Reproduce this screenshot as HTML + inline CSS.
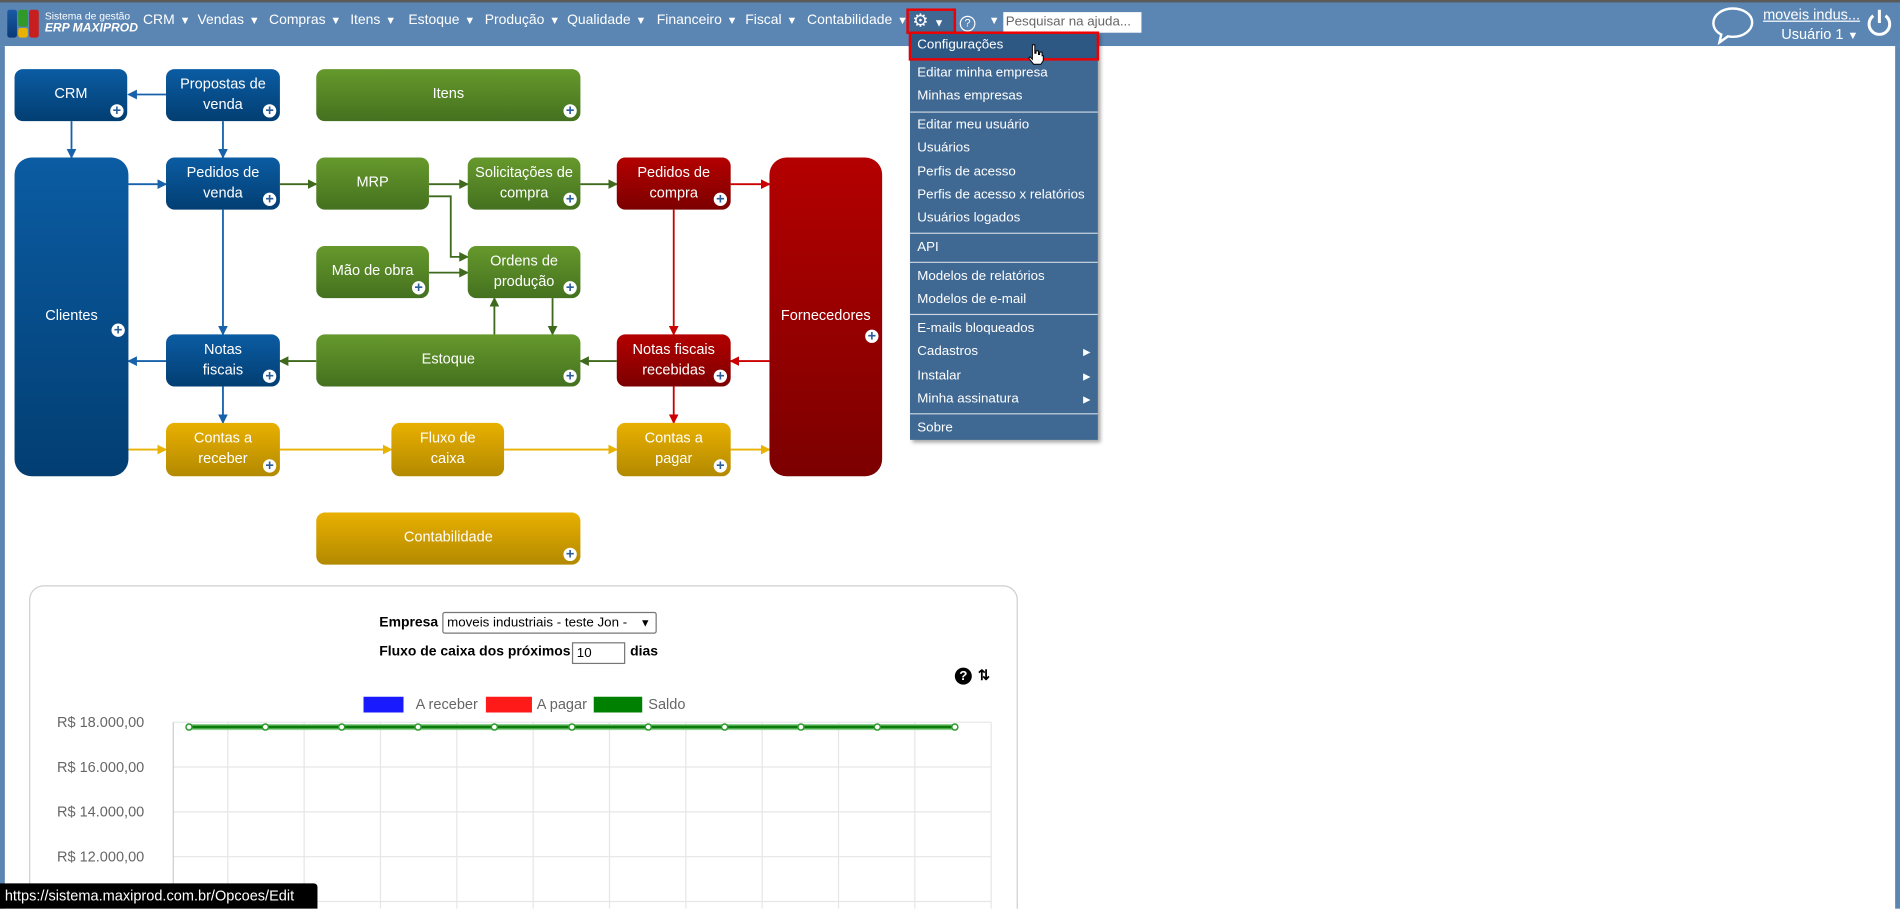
<!DOCTYPE html>
<html><head><meta charset="utf-8"><style>
html,body{margin:0;padding:0;width:1900px;height:909px;overflow:hidden;background:#fff;font-family:"Liberation Sans",Arial,sans-serif}
#w{position:absolute;left:0;top:0;width:1568px;height:750px;transform:scale(1.21173);transform-origin:0 0;overflow:hidden}
.top{position:absolute;left:0;top:0;width:1568px;height:38px;background:#5b86b3;border-top:2px solid #5a5a5a;box-sizing:border-box}
.lb{position:absolute;left:0;top:38px;width:4px;height:712px;background:#5b86b3}
.rb{position:absolute;left:1564px;top:38px;width:4px;height:712px;background:#5b86b3}
.nav{position:absolute;top:11px;color:#fff;font-size:11.5px}
.nav i{font-style:normal;font-size:9px;margin-left:4px}
.menu{position:absolute;left:751px;top:26px;width:155px;height:337px;background:#3f6893;box-shadow:2px 2px 3px rgba(0,0,0,.35)}
.mi{position:absolute;left:6px;color:#fff;font-size:11px}
.sep{position:absolute;left:0;width:155px;height:1px;background:#c8d4e0}
.arr{position:absolute;right:6px;font-size:8px}
.b{position:absolute;border-radius:7px;color:#fff;font-size:12px;display:flex;align-items:center;justify-content:center;text-align:center;line-height:17px;box-sizing:border-box;padding-bottom:2px}
.bl{background:linear-gradient(#0b5ca3,#023e72)}
.gr{background:linear-gradient(#66992c,#44711f)}
.rd{background:linear-gradient(#b40000,#7c0000)}
.ye{background:linear-gradient(#e9b000,#b28900)}
.p{position:absolute;width:11px;height:11px;border-radius:50%;background:#fff;right:3px;bottom:3px;color:#2a5d9a;font-size:12px;line-height:11px;text-align:center;font-weight:bold}
.panel{position:absolute;left:24px;top:483px;width:816px;height:300px;border:1px solid #cfcfcf;border-radius:12px;box-sizing:border-box}
.yl{position:absolute;left:47px;color:#666;font-size:12px}
</style></head><body><div id="w">
<div class="top"></div>
<div class="lb"></div><div class="rb"></div>
<div style="position:absolute;left:6px;top:8px;width:8px;height:23px;background:linear-gradient(#1b5aa5,#0a3a78);border-radius:2px"></div>
<div style="position:absolute;left:15px;top:8px;width:8px;height:14px;background:#2f9a2a;border-radius:2px"></div>
<div style="position:absolute;left:15px;top:23px;width:8px;height:8px;background:#e9b100;border-radius:2px"></div>
<div style="position:absolute;left:24px;top:8px;width:8px;height:23px;background:#c71f1f;border-radius:2px"></div>
<div style="position:absolute;left:37px;top:8px;color:#fff;font-size:8.5px;line-height:10px">Sistema de gestão<br><b style="font-style:italic;font-size:10px">ERP MAXIPROD</b></div>
<div class="nav" style="left:118px">CRM<i>▼</i></div>
<div class="nav" style="left:163px">Vendas<i>▼</i></div>
<div class="nav" style="left:222px">Compras<i>▼</i></div>
<div class="nav" style="left:289px">Itens<i>▼</i></div>
<div class="nav" style="left:337px">Estoque<i>▼</i></div>
<div class="nav" style="left:400px">Produção<i>▼</i></div>
<div class="nav" style="left:468px">Qualidade<i>▼</i></div>
<div class="nav" style="left:542px">Financeiro<i>▼</i></div>
<div class="nav" style="left:615px">Fiscal<i>▼</i></div>
<div class="nav" style="left:666px">Contabilidade<i>▼</i></div>
<div style="position:absolute;left:748px;top:7px;width:41px;height:21px;border:2px solid #e00;background:#3f6893;box-sizing:border-box"></div>
<div class="nav" style="left:753px;top:8px;font-size:15px">⚙<i>▼</i></div>
<div style="position:absolute;left:792px;top:13px;width:11px;height:11px;border:1.5px solid #fff;border-radius:50%;color:#fff;font-size:9px;line-height:11px;text-align:center">?</div>
<div class="nav" style="left:812px;top:11px"><i>▼</i></div>
<div style="position:absolute;left:828px;top:10px;width:114px;height:17px;background:#fff;color:#666;font-size:11px;line-height:17px;padding-left:2px;box-sizing:border-box">Pesquisar na ajuda...</div>
<svg style="position:absolute;left:1412px;top:5px" width="36" height="32" viewBox="0 0 36 32"><path d="M18 2C9 2 2 7.5 2 14c0 4 2.5 7.5 6.5 9.5L7 30l7-5c1.3.3 2.6.4 4 .4 9 0 16-5.5 16-11.9S27 2 18 2z" fill="none" stroke="#fff" stroke-width="2"/></svg>
<div style="position:absolute;left:1455px;top:5px;color:#fff;font-size:12px;text-decoration:underline">moveis indus...</div>
<div style="position:absolute;left:1470px;top:21px;color:#fff;font-size:12px">Usuário 1 <span style="font-size:9px">▼</span></div>
<svg style="position:absolute;left:1540px;top:6px" width="22" height="26" viewBox="0 0 22 26"><path d="M6 7A8.5 8.5 0 1 0 16 7" fill="none" stroke="#fff" stroke-width="2.5"/><line x1="11" y1="2" x2="11" y2="13" stroke="#fff" stroke-width="2.5"/></svg>
<div class="menu">
<div style="position:absolute;left:-1px;top:0;width:157px;height:24px;background:#2e5884;border:2px solid #e00;box-sizing:border-box"></div>
<div class="mi" style="top:5px">Configurações</div>
<div class="mi" style="top:28px">Editar minha empresa</div>
<div class="mi" style="top:47px">Minhas empresas</div>
<div class="sep" style="top:66px"></div>
<div class="mi" style="top:71px">Editar meu usuário</div>
<div class="mi" style="top:90px">Usuários</div>
<div class="mi" style="top:110px">Perfis de acesso</div>
<div class="mi" style="top:129px">Perfis de acesso x relatórios</div>
<div class="mi" style="top:148px">Usuários logados</div>
<div class="sep" style="top:166px"></div>
<div class="mi" style="top:172px">API</div>
<div class="sep" style="top:190px"></div>
<div class="mi" style="top:196px">Modelos de relatórios</div>
<div class="mi" style="top:215px">Modelos de e-mail</div>
<div class="sep" style="top:233px"></div>
<div class="mi" style="top:239px">E-mails bloqueados</div>
<div class="mi" style="top:258px">Cadastros</div><div class="mi arr" style="top:260px;left:auto">▶</div>
<div class="mi" style="top:278px">Instalar</div><div class="mi arr" style="top:280px;left:auto">▶</div>
<div class="mi" style="top:297px">Minha assinatura</div><div class="mi arr" style="top:299px;left:auto">▶</div>
<div class="sep" style="top:315px"></div>
<div class="mi" style="top:321px">Sobre</div>
</div>
<svg style="position:absolute;left:848px;top:36px" width="14" height="18" viewBox="0 0 14 18"><path d="M4 1h2v7h1V6h2v3h1V7h2v3h1v4l-2 3H5L1 12l1-1 2 2z" fill="#fff" stroke="#000" stroke-width=".8"/></svg>
<svg style="position:absolute;left:0;top:0" width="760" height="480">
<defs>
<marker id="mb" markerWidth="8" markerHeight="8" refX="7" refY="4" orient="auto" markerUnits="userSpaceOnUse"><path d="M0 0L8 4L0 8z" fill="#1762ab"/></marker>
<marker id="mg" markerWidth="8" markerHeight="8" refX="7" refY="4" orient="auto" markerUnits="userSpaceOnUse"><path d="M0 0L8 4L0 8z" fill="#3f6a1d"/></marker>
<marker id="mr" markerWidth="8" markerHeight="8" refX="7" refY="4" orient="auto" markerUnits="userSpaceOnUse"><path d="M0 0L8 4L0 8z" fill="#c00"/></marker>
<marker id="my" markerWidth="8" markerHeight="8" refX="7" refY="4" orient="auto" markerUnits="userSpaceOnUse"><path d="M0 0L8 4L0 8z" fill="#e9b100"/></marker>
</defs>
<g stroke="#1762ab" stroke-width="1.5" fill="none" marker-end="url(#mb)">
<line x1="137" y1="78" x2="106" y2="78"/><line x1="59" y1="100" x2="59" y2="130"/><line x1="184" y1="100" x2="184" y2="130"/>
<line x1="106" y1="152" x2="137" y2="152"/><line x1="184" y1="173" x2="184" y2="276"/><line x1="137" y1="298" x2="106" y2="298"/><line x1="184" y1="319" x2="184" y2="349"/>
</g>
<g stroke="#3f6a1d" stroke-width="1.5" fill="none" marker-end="url(#mg)">
<line x1="231" y1="152" x2="261" y2="152"/><line x1="354" y1="152" x2="386" y2="152"/><line x1="479" y1="152" x2="509" y2="152"/>
<polyline points="354,162 372,162 372,212 386,212"/><line x1="354" y1="225" x2="386" y2="225"/>
<line x1="408" y1="276" x2="408" y2="246"/><line x1="456" y1="246" x2="456" y2="276"/><line x1="261" y1="298" x2="231" y2="298"/><line x1="509" y1="298" x2="479" y2="298"/>
</g>
<g stroke="#c00" stroke-width="1.5" fill="none" marker-end="url(#mr)">
<line x1="603" y1="152" x2="635" y2="152"/><line x1="556" y1="173" x2="556" y2="276"/><line x1="635" y1="298" x2="603" y2="298"/><line x1="556" y1="319" x2="556" y2="349"/>
</g>
<g stroke="#e9b100" stroke-width="1.5" fill="none" marker-end="url(#my)">
<line x1="106" y1="371" x2="137" y2="371"/><line x1="231" y1="371" x2="323" y2="371"/><line x1="416" y1="371" x2="509" y2="371"/><line x1="603" y1="371" x2="635" y2="371"/>
</g>
</svg>
<div class="b bl" style="left:12px;top:57px;width:93px;height:43px">CRM<span class="p">+</span></div>
<div class="b bl" style="left:137px;top:57px;width:94px;height:43px">Propostas de<br>venda<span class="p">+</span></div>
<div class="b gr" style="left:261px;top:57px;width:218px;height:43px">Itens<span class="p">+</span></div>
<div class="b bl" style="left:12px;top:130px;width:94px;height:263px;border-radius:14px">Clientes<span class="p" style="bottom:115px">+</span></div>
<div class="b bl" style="left:137px;top:130px;width:94px;height:43px">Pedidos de<br>venda<span class="p">+</span></div>
<div class="b gr" style="left:261px;top:130px;width:93px;height:43px">MRP</div>
<div class="b gr" style="left:386px;top:130px;width:93px;height:43px">Solicitações de<br>compra<span class="p">+</span></div>
<div class="b rd" style="left:509px;top:130px;width:94px;height:43px">Pedidos de<br>compra<span class="p">+</span></div>
<div class="b rd" style="left:635px;top:130px;width:93px;height:263px;border-radius:14px">Fornecedores<span class="p" style="bottom:110px">+</span></div>
<div class="b gr" style="left:261px;top:203px;width:93px;height:43px">Mão de obra<span class="p">+</span></div>
<div class="b gr" style="left:386px;top:203px;width:93px;height:43px">Ordens de<br>produção<span class="p">+</span></div>
<div class="b bl" style="left:137px;top:276px;width:94px;height:43px">Notas<br>fiscais<span class="p">+</span></div>
<div class="b gr" style="left:261px;top:276px;width:218px;height:43px">Estoque<span class="p">+</span></div>
<div class="b rd" style="left:509px;top:276px;width:94px;height:43px">Notas fiscais<br>recebidas<span class="p">+</span></div>
<div class="b ye" style="left:137px;top:349px;width:94px;height:44px">Contas a<br>receber<span class="p">+</span></div>
<div class="b ye" style="left:323px;top:349px;width:93px;height:44px">Fluxo de<br>caixa</div>
<div class="b ye" style="left:509px;top:349px;width:94px;height:44px">Contas a<br>pagar<span class="p">+</span></div>
<div class="b ye" style="left:261px;top:423px;width:218px;height:43px">Contabilidade<span class="p">+</span></div>
<div class="panel"></div>
<div style="position:absolute;left:313px;top:508px;font-size:11.5px;font-weight:bold">Empresa</div>
<div style="position:absolute;left:365px;top:505px;width:177px;height:18px;border:1px solid #767676;border-radius:2px;box-sizing:border-box;font-size:11px;line-height:16px;padding-left:3px">moveis industriais - teste Jon - <span style="position:absolute;right:4px;font-size:9px">▼</span></div>
<div style="position:absolute;left:313px;top:532px;font-size:11.5px;font-weight:bold">Fluxo de caixa dos próximos</div>
<div style="position:absolute;left:472px;top:530px;width:44px;height:18px;border:1px solid #767676;box-sizing:border-box;font-size:11px;line-height:16px;padding-left:3px">10</div>
<div style="position:absolute;left:520px;top:532px;font-size:11.5px;font-weight:bold">dias</div>
<div style="position:absolute;left:788px;top:551px;width:14px;height:14px;border-radius:50%;background:#000;color:#fff;font-size:11px;font-weight:bold;text-align:center;line-height:14px">?</div>
<div style="position:absolute;left:807px;top:550px;font-size:12px;font-weight:bold">⇅</div>
<div style="position:absolute;left:300px;top:575px;width:33px;height:13px;background:#1a1aff"></div>
<div style="position:absolute;left:343px;top:574px;color:#666;font-size:12px">A receber</div>
<div style="position:absolute;left:401px;top:575px;width:38px;height:13px;background:#ff1a1a"></div>
<div style="position:absolute;left:443px;top:574px;color:#666;font-size:12px">A pagar</div>
<div style="position:absolute;left:490px;top:575px;width:40px;height:13px;background:#008000"></div>
<div style="position:absolute;left:535px;top:574px;color:#666;font-size:12px">Saldo</div>
<div class="yl" style="top:589px">R$ 18.000,00</div>
<div class="yl" style="top:626px">R$ 16.000,00</div>
<div class="yl" style="top:663px">R$ 14.000,00</div>
<div class="yl" style="top:700px">R$ 12.000,00</div>
<svg style="position:absolute;left:0;top:0" width="840" height="750">
<g stroke="#e6e6e6" stroke-width="1">
<line x1="143" y1="596" x2="818" y2="596"/><line x1="143" y1="633" x2="818" y2="633"/><line x1="143" y1="670" x2="818" y2="670"/><line x1="143" y1="707" x2="818" y2="707"/><line x1="143" y1="744" x2="818" y2="744"/>
<line x1="188" y1="596" x2="188" y2="750"/><line x1="251" y1="596" x2="251" y2="750"/><line x1="314" y1="596" x2="314" y2="750"/><line x1="377" y1="596" x2="377" y2="750"/><line x1="440" y1="596" x2="440" y2="750"/><line x1="503" y1="596" x2="503" y2="750"/><line x1="566" y1="596" x2="566" y2="750"/><line x1="629" y1="596" x2="629" y2="750"/><line x1="692" y1="596" x2="692" y2="750"/><line x1="755" y1="596" x2="755" y2="750"/><line x1="818" y1="596" x2="818" y2="750"/>
</g>
<line x1="143" y1="596" x2="143" y2="750" stroke="#ccc"/>
<line x1="156" y1="600" x2="788" y2="600" stroke="#8fd18f" stroke-width="5"/>
<line x1="156" y1="600" x2="788" y2="600" stroke="#0a7a0a" stroke-width="2.5"/>
<g fill="#fff" stroke="#2a9a2a" stroke-width="1.2">
<circle cx="156" cy="600" r="2.5"/><circle cx="219" cy="600" r="2.5"/><circle cx="282" cy="600" r="2.5"/><circle cx="345" cy="600" r="2.5"/><circle cx="408" cy="600" r="2.5"/><circle cx="472" cy="600" r="2.5"/><circle cx="535" cy="600" r="2.5"/><circle cx="598" cy="600" r="2.5"/><circle cx="661" cy="600" r="2.5"/><circle cx="724" cy="600" r="2.5"/><circle cx="788" cy="600" r="2.5"/>
</g>
</svg>
<div style="position:absolute;left:0;top:729px;width:262px;height:21px;background:#000;color:#fff;font-size:12px;line-height:21px;padding-left:4px;box-sizing:border-box;border-top-right-radius:3px">https://sistema.maxiprod.com.br/Opcoes/Edit</div>
</div></body></html>
